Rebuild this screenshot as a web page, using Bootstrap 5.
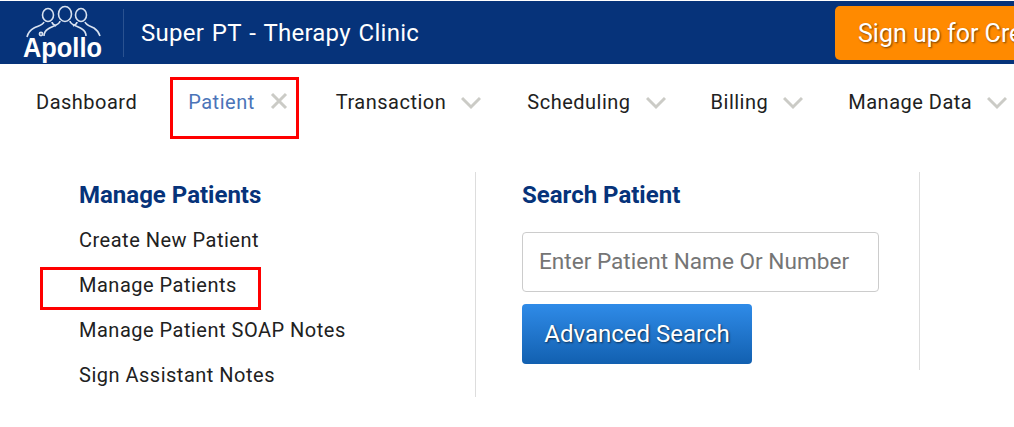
<!DOCTYPE html>
<html lang="en">
<head>
    <meta charset="UTF-8">
    <meta name="viewport" content="width=device-width, initial-scale=1.0">
    <title>Super PT - Therapy Clinic</title>
    <link href="https://cdn.jsdelivr.net/npm/bootstrap@5.3.2/dist/css/bootstrap.min.css" rel="stylesheet">
    <style>
        html, body { height: 427px; overflow: hidden; }
        body { font-family: Roboto, "Liberation Sans", sans-serif; color: #212121; background: #fff; position: relative; padding-top: 1px; }
        .top-bar { background: #06337a; height: 63px; padding-left: 20px; overflow: hidden; }
        .logo-box { width: 103px; height: 63px; }
        .logo-box svg { display: block; overflow: visible; }
        .logo-box text { font-family: "Liberation Sans", sans-serif; font-weight: 700; }
        .logo-sep { width: 1px; height: 48px; background: #2a5290; margin-right: 17px; }
        .clinic-name { color: #fff; font-size: 24px; letter-spacing: .25px; word-spacing: 1.6px; white-space: nowrap; width: 277px; flex: none; }
        .signup-btn { background: #ff8a00; color: #fff; font-size: 25px; height: 54px; margin-top: 5px; margin-left: 417px; padding: 2px 23px 0; border: 0; border-radius: 5px 0 0 5px; white-space: nowrap; text-shadow: 1px 1px 2px rgba(0,0,0,.55); flex: none; }
        .menu-bar { height: 76px; padding-left: 36px; padding-top: 25px; white-space: nowrap; gap: 46px; }
        .menu-item { font-size: 20px; line-height: 26px; color: #212121; text-decoration: none; letter-spacing: .5px; flex: none; }
        .menu-item:first-child { margin-right: 5px; }
        .menu-item.active-item { color: #4b74b8; margin-right: 2px; }
        .menu-item:nth-child(4), .menu-item:nth-child(5) { margin-right: -1px; }
        .menu-item svg { margin-left: 15px; vertical-align: -1px; }
        .panel { padding-left: 79px; padding-top: 32px; }
        .panel-col { flex: none; }
        .col-links { width: 397px; height: 225px; border-right: 1px solid #ddd; }
        .col-search { width: 444px; height: 198px; padding-left: 46px; border-right: 1px solid #ddd; }
        .panel-title { color: #06337a; font-size: 24px; font-weight: 700; line-height: 30px; margin: 8px 0 0; }
        .panel-links { margin-top: 8px; }
        .panel-links a { display: block; font-size: 20px; line-height: 45px; color: #212121; text-decoration: none; letter-spacing: .5px; white-space: nowrap; }
        .search-input { width: 357px; height: 60px; margin-top: 22px; font-size: 22.6px; border: 1px solid #ccc; border-radius: 4px; padding: 0 15px 2px 16px; font-family: inherit; }
        .search-input::placeholder { color: #757575; opacity: 1; }
        .adv-btn { width: 230px; height: 60px; margin-top: 12px; border: 0; border-radius: 4px; color: #fff; font-size: 24px; background: linear-gradient(#2f8be8, #1260b0); text-shadow: 1px 1px 2px rgba(0,0,0,.6); padding: 0; }
        .red-mark { position: absolute; border: 3px solid #f00; pointer-events: none; }
        .mark-patient { left: 170px; top: 77px; width: 129px; height: 62px; }
        .mark-manage { left: 40px; top: 267px; width: 221px; height: 43px; }
    </style>
</head>
<body>

<header class="top-bar d-flex align-items-center">
    <div class="logo-box flex-shrink-0">
        <svg width="100" height="63" viewBox="0 0 100 63">
            <g fill="none" stroke="#d8e2f0" stroke-width="1.6">
                <ellipse cx="28" cy="14" rx="5.5" ry="6.5"/>
                <ellipse cx="45" cy="13" rx="6.5" ry="7.5"/>
                <ellipse cx="61" cy="14" rx="5.5" ry="6.5"/>
                <path d="M24 21c-1 3-6 4-10 6-4 2-6 5-7 9"/>
                <path d="M32 21c0 2 2 3 4 4"/>
                <path d="M40 20c0 4-8 5-12 8-3 2-4 5-4 7"/>
                <path d="M50 20c0 4 8 5 12 8 3 2 4 5 4 7"/>
                <path d="M57 21c0 2-2 3-4 4"/>
                <path d="M65 21c1 3 5 4 9 6 3 2 5 5 6 8"/>
                <circle cx="21" cy="33" r="1.6"/>
            </g>
            <text x="3" y="56" font-size="28" fill="#fff" textLength="79" lengthAdjust="spacingAndGlyphs">Apollo</text>
        </svg>
    </div>
    <div class="logo-sep flex-shrink-0"></div>
    <div class="clinic-name">Super PT - Therapy Clinic</div>
    <button class="signup-btn align-self-start">Sign up for Credit Card Processing</button>
</header>

<nav class="menu-bar d-flex">
    <a class="menu-item" href="#">Dashboard</a>
    <a class="menu-item active-item" href="#">Patient<svg width="18" height="18" viewBox="0 0 18 18"><path d="M2 2 16 16M16 2 2 16" stroke="#cbcbc6" stroke-width="3" fill="none"/></svg></a>
    <a class="menu-item" href="#">Transaction<svg width="20" height="14" viewBox="0 0 20 14"><path d="M1 2 10 11 19 2" stroke="#cbcbc6" stroke-width="3" fill="none"/></svg></a>
    <a class="menu-item" href="#">Scheduling<svg width="20" height="14" viewBox="0 0 20 14"><path d="M1 2 10 11 19 2" stroke="#cbcbc6" stroke-width="3" fill="none"/></svg></a>
    <a class="menu-item" href="#">Billing<svg width="20" height="14" viewBox="0 0 20 14"><path d="M1 2 10 11 19 2" stroke="#cbcbc6" stroke-width="3" fill="none"/></svg></a>
    <a class="menu-item" href="#">Manage Data<svg width="20" height="14" viewBox="0 0 20 14"><path d="M1 2 10 11 19 2" stroke="#cbcbc6" stroke-width="3" fill="none"/></svg></a>
</nav>

<main class="panel d-flex">
    <section class="panel-col col-links">
        <h2 class="panel-title">Manage Patients</h2>
        <div class="panel-links">
            <a href="#">Create New Patient</a>
            <a href="#">Manage Patients</a>
            <a href="#">Manage Patient SOAP Notes</a>
            <a href="#">Sign Assistant Notes</a>
        </div>
    </section>
    <section class="panel-col col-search">
        <h2 class="panel-title">Search Patient</h2>
        <input class="search-input d-block" type="text" placeholder="Enter Patient Name Or Number">
        <button class="adv-btn d-block">Advanced Search</button>
    </section>
</main>

<div class="red-mark mark-patient"></div>
<div class="red-mark mark-manage"></div>

<script src="https://cdn.jsdelivr.net/npm/bootstrap@5.3.2/dist/js/bootstrap.bundle.min.js"></script>
</body>
</html>
